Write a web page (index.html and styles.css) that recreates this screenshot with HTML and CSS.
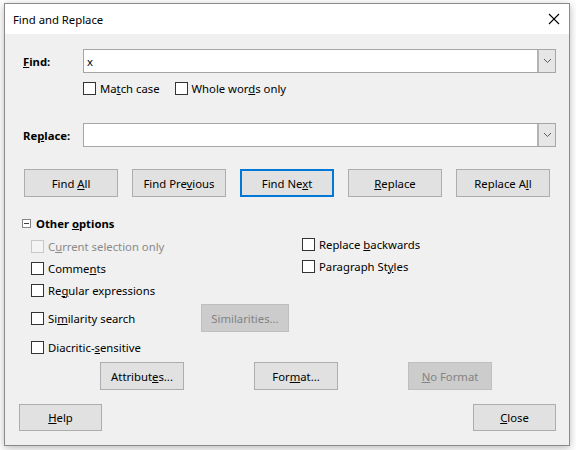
FILE: index.html
```html
<!DOCTYPE html>
<html>
<head>
<meta charset="utf-8">
<link rel="stylesheet" href="styles.css">
</head>
<body>
<div class="window">
  <div class="titlebar">
    <span class="title">Find and Replace</span>
    <span class="close-x"><svg width="12" height="12" viewBox="0 0 12 12"><path d="M1 1L11 11M11 1L1 11" stroke="#000" stroke-width="1.1" fill="none"/></svg></span>
  </div>
  <div class="content">
    <div class="field-row">
      <span class="field-label"><u>F</u>ind:</span>
      <div class="combo"><span class="combo-text">x</span><span class="combo-btn"><svg width="9" height="6" viewBox="0 0 9 6"><path d="M1 1L4.5 4.5L8 1" stroke="#5a5a5a" stroke-width="1" fill="none"/></svg></span></div>
    </div>
    <div class="check-row">
      <label class="check"><span class="box"></span><span>Ma<u>t</u>ch case</span></label>
      <label class="check"><span class="box"></span><span>Whole wor<u>d</u>s only</span></label>
    </div>
    <div class="field-row replace-row">
      <span class="field-label">Re<u>p</u>lace:</span>
      <div class="combo"><span class="combo-text"></span><span class="combo-btn"><svg width="9" height="6" viewBox="0 0 9 6"><path d="M1 1L4.5 4.5L8 1" stroke="#5a5a5a" stroke-width="1" fill="none"/></svg></span></div>
    </div>
    <div class="btn-row">
      <button class="btn wide"><span>Find <u>A</u>ll</span></button>
      <button class="btn wide"><span>Find Pre<u>v</u>ious</span></button>
      <button class="btn wide focused"><span>Find Ne<u>x</u>t</span></button>
      <button class="btn wide"><span><u>R</u>eplace</span></button>
      <button class="btn wide"><span>Replace A<u>l</u>l</span></button>
    </div>
    <div class="expander">
      <span class="minus-box"></span>
      <span class="expander-label">Other <u>o</u>ptions</span>
    </div>
    <div class="options">
      <div class="opt-row">
        <label class="check col-left disabled"><span class="box"></span><span>C<u>u</u>rrent selection only</span></label>
        <label class="check col-right"><span class="box"></span><span>Replace <u>b</u>ackwards</span></label>
      </div>
      <div class="opt-row">
        <label class="check col-left"><span class="box"></span><span>Comme<u>n</u>ts</span></label>
        <label class="check col-right"><span class="box"></span><span>Paragraph St<u>y</u>les</span></label>
      </div>
      <div class="opt-row">
        <label class="check col-left"><span class="box"></span><span>Re<u>g</u>ular expressions</span></label>
      </div>
      <div class="opt-row sim-row">
        <label class="check sim-check"><span class="box"></span><span>Si<u>m</u>ilarity search</span></label>
        <button class="btn sim-btn" disabled><span>Similarities...</span></button>
      </div>
      <div class="opt-row diac-row">
        <label class="check col-left"><span class="box"></span><span>Diacritic-<u>s</u>ensitive</span></label>
      </div>
    </div>
    <div class="action-row">
      <button class="btn action"><span>Attribut<u>e</u>s...</span></button>
      <button class="btn action"><span>For<u>m</u>at...</span></button>
      <button class="btn action" disabled><span><u>N</u>o Format</span></button>
    </div>
    <div class="footer">
      <button class="btn foot"><span><u>H</u>elp</span></button>
      <button class="btn foot"><span><u>C</u>lose</span></button>
    </div>
  </div>
</div>
</body>
</html>
```

FILE: styles.css
```css
* { box-sizing: border-box; }

html, body {
  margin: 0;
  padding: 0;
  background: #ffffff;
}

body {
  width: 576px;
  height: 450px;
  overflow: hidden;
  font-family: "Noto Sans", "DejaVu Sans", sans-serif;
  font-size: 11.3px;
  color: #000;
}

u { text-decoration: underline; text-underline-offset: 1px; text-decoration-thickness: 1px; }

.window {
  margin: 3px 0 0 4px;
  width: 566px;
  height: 443px;
  border: 1px solid #8a8a8a;
  background: #f0f0f0;
  box-shadow: 0 2px 8px rgba(0, 0, 0, 0.28);
  display: flex;
  flex-direction: column;
}

.titlebar {
  height: 30px;
  background: #ffffff;
  display: flex;
  align-items: center;
  justify-content: space-between;
  padding: 0 9px 0 8px;
  flex: none;
}

.title {
  font-size: 11.3px;
  line-height: 14px;
  margin-top: 1px;
}

.close-x {
  display: flex;
  width: 12px;
  height: 12px;
}

.content {
  padding: 0 13px 0 14px;
  display: flex;
  flex-direction: column;
}

.field-row {
  margin-top: 15px;
  padding-left: 4px;
  display: flex;
  align-items: center;
  height: 24px;
}

.replace-row { margin-top: 24px; }

.field-label {
  width: 60px;
  font-weight: bold;
  flex: none;
}

.combo {
  flex: 1;
  height: 24px;
  border: 1px solid #a6a6a6;
  background: #ffffff;
  display: flex;
  align-items: stretch;
}

.combo-text {
  flex: 1;
  padding-left: 3px;
  display: flex;
  align-items: center;
}

.combo-btn {
  width: 18px;
  background: #e6e6e6;
  border-left: 2px solid #b4b4b4;
  display: flex;
  align-items: center;
  justify-content: center;
}

.check-row {
  margin-top: 4px;
  height: 22px;
  padding-left: 64px;
  display: flex;
  align-items: center;
  gap: 15px;
}

.check {
  display: flex;
  align-items: center;
  white-space: nowrap;
}

.box {
  width: 13px;
  height: 13px;
  border: 1px solid #333333;
  background: #ffffff;
  margin-right: 4px;
  flex: none;
}

.check.disabled { color: #8a8a8a; }
.check.disabled .box { border-color: #c8c8c8; background: #f4f4f4; }

.btn {
  font-family: inherit;
  font-size: 11.3px;
  color: #000;
  background: #e1e1e1;
  border: 1px solid #adadad;
  padding: 0;
  margin: 0;
  height: 28px;
  display: flex;
  align-items: center;
  justify-content: center;
}

.btn:disabled {
  background: #cccccc;
  border-color: #bfbfbf;
  color: #838383;
}

.btn.focused { border: 2px solid #0078d7; }

.btn-row {
  margin-top: 22px;
  padding-left: 5px;
  display: flex;
  gap: 14px;
}

.btn.wide { width: 94px; }

.expander {
  margin-top: 15px;
  height: 22px;
  padding-left: 3px;
  display: flex;
  align-items: center;
}

.minus-box {
  width: 9px;
  height: 9px;
  border: 1px solid #858585;
  background: #ffffff;
  position: relative;
  margin-right: 5px;
  flex: none;
}

.minus-box::after {
  content: "";
  position: absolute;
  left: 1px;
  top: 3px;
  width: 5px;
  height: 1px;
  background: #404040;
}

.expander-label { font-weight: bold; }

.options {
  margin-top: 1px;
  padding-left: 12px;
  display: flex;
  flex-direction: column;
}

.opt-row {
  height: 22px;
  display: flex;
  align-items: center;
}

.col-left { width: 271px; }

.col-right { margin-top: -3px; }

.sim-row {
  height: 28px;
  margin-top: 3px;
}

.sim-check { width: 170px; }

.sim-btn { width: 88px; }

.diac-row { margin-top: 4px; }

.action-row {
  margin-top: 4px;
  padding-left: 81px;
  display: flex;
  gap: 70px;
}

.btn.action { width: 84px; }

.footer {
  margin-top: 14px;
  display: flex;
  justify-content: space-between;
}

.btn.foot { width: 83px; height: 27px; }
```
